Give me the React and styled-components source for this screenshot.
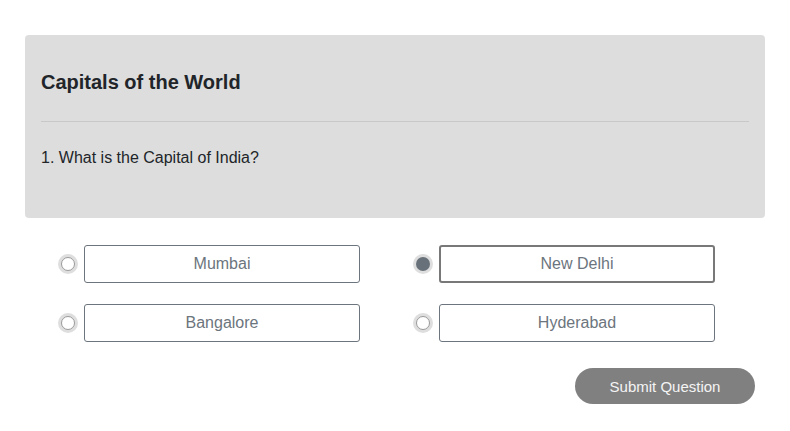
import styled, { createGlobalStyle } from "styled-components";

const GlobalStyle = createGlobalStyle`
  body {
    margin: 0;
    background: #fff;
    font-family: "Liberation Sans", Arial, sans-serif;
  }
`;

const Page = styled.div`
  padding: 35px 25px;
`;

const Card = styled.section`
  background: #dddddd;
  border-radius: 4px;
  padding: 0 16px;
  height: 183px;
  box-sizing: border-box;
  overflow: hidden;
`;

const Title = styled.h2`
  margin: 0;
  padding: 35px 0 27px;
  font-size: 20px;
  line-height: 24px;
  font-weight: bold;
  color: #212529;
  border-bottom: 1px solid #c8c8c8;
`;

const Question = styled.p`
  margin: 27px 0 0;
  font-size: 16px;
  line-height: 18px;
  color: #212529;
`;

const Options = styled.div`
  display: grid;
  grid-template-columns: 355px 355px;
  row-gap: 21px;
  margin: 27px 0 0 33px;
`;

const Option = styled.label`
  display: flex;
  align-items: center;
  gap: 6px;
  cursor: pointer;
`;

const Radio = styled.input.attrs({ type: "radio" })`
  appearance: none;
  margin: 0 3px;
  width: 14px;
  height: 14px;
  border-radius: 50%;
  box-sizing: border-box;
  border: 1px solid #9a9a9a;
  background: #fff;
  box-shadow: 0 0 0 3px #dedede;

  &:checked {
    border: none;
    background: #68717a;
  }
`;

const Choice = styled.div`
  width: 276px;
  height: 38px;
  box-sizing: border-box;
  display: flex;
  align-items: center;
  justify-content: center;
  border: ${(p) => (p.$active ? "2px solid #787878" : "1px solid #6c757d")};
  border-radius: 3px;
  background: #fff;
  color: #6c757d;
  font-size: 16px;
`;

const Footer = styled.div`
  display: flex;
  justify-content: flex-end;
  margin: 26px 10px 0 0;
`;

const SubmitButton = styled.button`
  width: 180px;
  height: 36px;
  border: none;
  border-radius: 18px;
  background: #808080;
  color: #f4f4f4;
  font-family: "Liberation Sans", Arial, sans-serif;
  font-size: 15px;
  cursor: pointer;
`;

const answers = ["Mumbai", "New Delhi", "Bangalore", "Hyderabad"];

export default function App() {
  const selected = "New Delhi";
  return (
    <Page>
      <GlobalStyle />
      <Card>
        <Title>Capitals of the World</Title>
        <Question>1. What is the Capital of India?</Question>
      </Card>
      <Options>
        {answers.map((a) => (
          <Option key={a}>
            <Radio name="capital" defaultChecked={a === selected} />
            <Choice $active={a === selected}>{a}</Choice>
          </Option>
        ))}
      </Options>
      <Footer>
        <SubmitButton>Submit Question</SubmitButton>
      </Footer>
    </Page>
  );
}
